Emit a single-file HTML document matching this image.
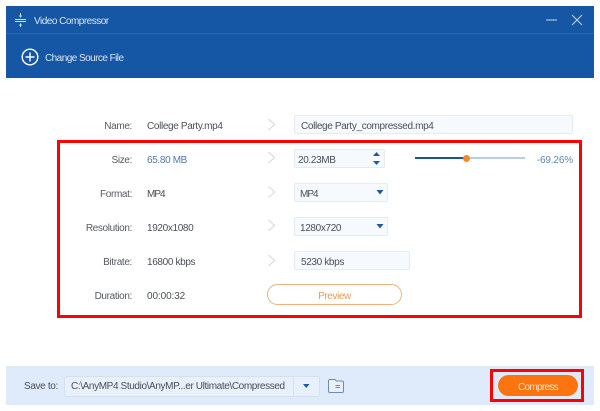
<!DOCTYPE html>
<html><head><meta charset="utf-8">
<style>
html,body{margin:0;padding:0;background:#fff}
#p{position:relative;width:600px;height:411px;overflow:hidden;background:#fff;font-family:"Liberation Sans",sans-serif;font-size:10px;letter-spacing:-.35px;color:#4a4f57}
#p div,#p svg{position:absolute}
.t{white-space:nowrap;line-height:12px}
.l{right:468px;text-align:right;color:#555a62}
.v{left:147px}
.b{background:#f6f9fd;border:1px solid #e3ebf5;border-radius:2px;box-sizing:border-box}
</style></head><body><div id="p">
<div style="left:6px;top:6px;width:588px;height:72px;background:#1557a5"></div>
<div style="left:6px;top:33px;width:588px;height:1px;background:#2a69b3"></div>
<svg style="left:14px;top:13px" width="14" height="14" viewBox="0 0 14 14" fill="none" stroke="#cfdef0" stroke-width="1"><path d="M1 6.500H12M1 8.500H12"/><path d="M6.500 0V3.500M6.500 11V14"/><path d="M5 2.500L6.500 5L8 2.500M5 12.500L6.500 10L8 12.500" fill="#cfdef0" stroke="none"/></svg>
<div class="t" style="left:34px;top:16px;color:#d8e4f3;letter-spacing:-.5px">Video Compressor</div>
<svg style="left:21px;top:48px" width="18" height="18" viewBox="0 0 18 18" fill="none" stroke="#fff" stroke-width="1.400"><circle cx="9" cy="9" r="7.800"/><path d="M4.500 9H13.500M9 4.500V13.500"/></svg>
<div class="t" style="left:45px;top:53px;color:#d8e4f3;letter-spacing:-.55px">Change Source File</div>
<svg style="left:544px;top:13px" width="42" height="14" viewBox="0 0 42 14" fill="none" stroke="#c6d6ea" stroke-width="1"><path d="M2 7H13"/><path d="M28 2L38 12M38 2L28 12"/></svg>

<div class="t l" style="top:121px">Name:</div>
<div class="t v" style="top:121px">College Party.mp4</div>
<div class="t l" style="top:155px">Size:</div>
<div class="t v" style="top:155px;color:#4f7aa8">65.80 MB</div>
<div class="t l" style="top:189px">Format:</div>
<div class="t v" style="top:189px;letter-spacing:-1px">MP4</div>
<div class="t l" style="top:223px">Resolution:</div>
<div class="t v" style="top:223px">1920x1080</div>
<div class="t l" style="top:257px">Bitrate:</div>
<div class="t v" style="top:257px">16800 kbps</div>
<div class="t l" style="top:291px">Duration:</div>
<div class="t v" style="top:291px;letter-spacing:-.1px">00:00:32</div>

<svg style="left:267px;top:118px" width="10" height="160" viewBox="0 0 10 160" fill="none" stroke="#d0d6de" stroke-width="1"><path d="M1.500 1L7.500 6.500L1.500 12"/><path d="M1.500 34L7.500 39.500L1.500 45"/><path d="M1.500 68.500L7.500 74L1.500 79.500"/><path d="M1.500 102L7.500 107.500L1.500 113"/><path d="M1.500 137L7.500 142.500L1.500 148"/></svg>

<div class="b" style="left:294px;top:115px;width:279px;height:19px"></div>
<div class="t" style="left:301px;top:121px">College Party_compressed.mp4</div>

<div class="b" style="left:294px;top:149px;width:91px;height:19px"></div>
<div class="t" style="left:298px;top:155px">20.23MB</div>
<svg style="left:372px;top:150px" width="12" height="17" viewBox="0 0 12 17" fill="#1f5aa0"><path d="M1 6L4.500 2L8 6Z"/><path d="M1 11H8L4.500 15Z"/></svg>
<div style="left:415px;top:157px;width:50px;height:2px;background:#1a5499"></div>
<div style="left:465px;top:157px;width:60px;height:1.500px;background:#b7cde3"></div>
<div style="left:463px;top:155px;width:7px;height:7px;border-radius:50%;background:#f58a33"></div>
<div class="t" style="right:27px;top:155px;color:#5f86ad;letter-spacing:-.15px">-69.26%</div>

<div class="b" style="left:294px;top:183px;width:94px;height:19px"></div>
<div class="t" style="left:300px;top:189px;letter-spacing:-1px">MP4</div>
<svg style="left:376px;top:189px" width="10" height="8" viewBox="0 0 10 8" fill="#1f5aa0"><path d="M0.500 1H7.500L4 5.500Z"/></svg>

<div class="b" style="left:294px;top:217px;width:94px;height:19px"></div>
<div class="t" style="left:300px;top:223px">1280x720</div>
<svg style="left:376px;top:223px" width="10" height="8" viewBox="0 0 10 8" fill="#1f5aa0"><path d="M0.500 1H7.500L4 5.500Z"/></svg>

<div class="b" style="left:294px;top:251px;width:116px;height:19px"></div>
<div class="t" style="left:301px;top:257px">5230 kbps</div>

<div style="left:267px;top:284px;width:135px;height:21px;box-sizing:border-box;border:1px solid #eeb27e;border-radius:10.500px"></div>
<div class="t" style="left:267px;width:135px;top:291px;text-align:center;color:#e89a5c;letter-spacing:-.4px">Preview</div>

<div style="left:57px;top:140px;width:525px;height:178px;box-sizing:border-box;border:3px solid #f00"></div>

<div style="left:6px;top:366px;width:588px;height:39px;background:#dfeafa"></div>
<div class="t" style="left:24px;top:381px">Save to:</div>
<div style="left:64px;top:376px;width:256px;height:21px;box-sizing:border-box;background:#e8f0fb;border:1px solid #d3e0f0;border-radius:3px"></div>
<div style="left:293px;top:376px;width:1px;height:21px;background:#d3e0f0"></div>
<div class="t" style="left:71px;top:381px;letter-spacing:-.38px">C:\AnyMP4 Studio\AnyMP...er Ultimate\Compressed</div>
<svg style="left:302px;top:383px" width="10" height="8" viewBox="0 0 10 8" fill="#1f5aa0"><path d="M1 1H7.500L4.250 5Z"/></svg>
<svg style="left:327px;top:378px" width="18" height="16" viewBox="0 0 18 16" fill="none" stroke="#6d8bad" stroke-width="1"><path d="M1.500 3.500Q1.500 1.500 3 1.500H8L9.500 3H15Q16.500 3 16.500 4.500V13Q16.500 14.500 15 14.500H3Q1.500 14.500 1.500 13Z" fill="#e8f0fb"/><path d="M8.500 7.500H13M8.500 9.500H13"/></svg>

<div style="left:490px;top:369px;width:94px;height:33px;box-sizing:border-box;border:3px solid #f00"></div>
<div style="left:498px;top:375px;width:80px;height:21px;border-radius:11px;background:#fb7410"></div>
<div class="t" style="left:498px;width:80px;top:382px;text-align:center;color:#fde2c8;letter-spacing:-.7px">Compress</div>
</div></body></html>
